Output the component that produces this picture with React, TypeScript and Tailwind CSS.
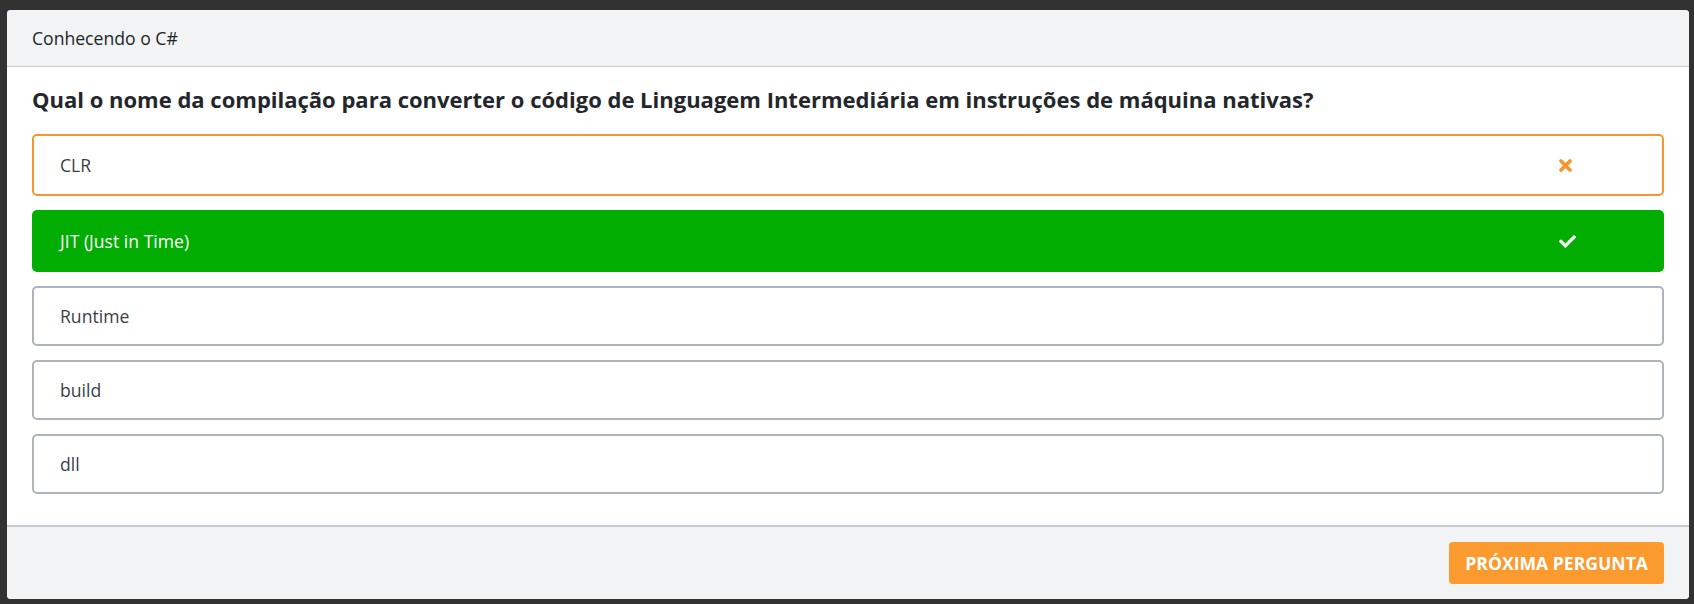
import { FaCheck } from "react-icons/fa";

type Option = {
  label: string;
  state?: "wrong" | "right";
};

const options: Option[] = [
  { label: "CLR", state: "wrong" },
  { label: "JIT (Just in Time)", state: "right" },
  { label: "Runtime" },
  { label: "build" },
  { label: "dll" },
];

function OptionRow({ label, state }: Option) {
  if (state === "wrong") {
    return (
      <div className="flex h-[62px] items-center justify-between rounded-[5px] border-2 border-[#f7962e] bg-white pl-[26px] pr-[90px] text-[17.6px] text-[#3b3f44]">
        <span>{label}</span>
        <svg width="13" height="13" viewBox="0 0 13 13" className="text-[#f7962e]">
          <path d="M2 2 L11 11 M11 2 L2 11" stroke="currentColor" strokeWidth="3.6" strokeLinecap="round" />
        </svg>
      </div>
    );
  }
  if (state === "right") {
    return (
      <div className="flex h-[62px] items-center justify-between rounded-[5px] bg-[#00ad00] pl-[28px] pr-[88px] text-[17.6px] text-white">
        <span>{label}</span>
        <FaCheck className="text-[17px] text-white" />
      </div>
    );
  }
  return (
    <div className="flex h-[60px] items-center rounded-[5px] border-2 border-[#adb4bc] bg-white pl-[26px] text-[17.6px] text-[#3b3f44]">
      <span>{label}</span>
    </div>
  );
}

export default function App() {
  return (
    <div
      className="h-[604px] w-[1694px] bg-[#323232] pb-[5px] pl-[7px] pr-[5px] pt-[10px]"
      style={{ fontFamily: '"Open Sans", "Noto Sans", sans-serif' }}
    >
      <div className="flex h-full flex-col overflow-hidden rounded-[4px] bg-white">
        <div className="flex h-[57px] shrink-0 items-center border-b border-[#c8ccd1] bg-[#f2f3f5] px-[25px] text-[17.6px] text-[#212529]">
          Conhecendo o C#
        </div>
        <div className="flex-1 px-[25px] pt-[16px]">
          <h1 className="text-[22px] font-bold leading-[33px] text-[#23272b]">
            Qual o nome da compilação para converter o código de Linguagem Intermediária em instruções de máquina nativas?
          </h1>
          <div className="mt-[18px] flex flex-col gap-[14px]">
            {options.map((o) => (
              <OptionRow key={o.label} {...o} />
            ))}
          </div>
        </div>
        <div className="flex h-[74px] shrink-0 items-center justify-end border-t-2 border-[#c8ccd1] bg-[#f2f3f5] px-[25px]">
          <button className="h-[42px] rounded-[4px] bg-[#fb9a2e] px-[16px] text-[17.6px] font-bold uppercase text-white">
            Próxima Pergunta
          </button>
        </div>
      </div>
    </div>
  );
}
